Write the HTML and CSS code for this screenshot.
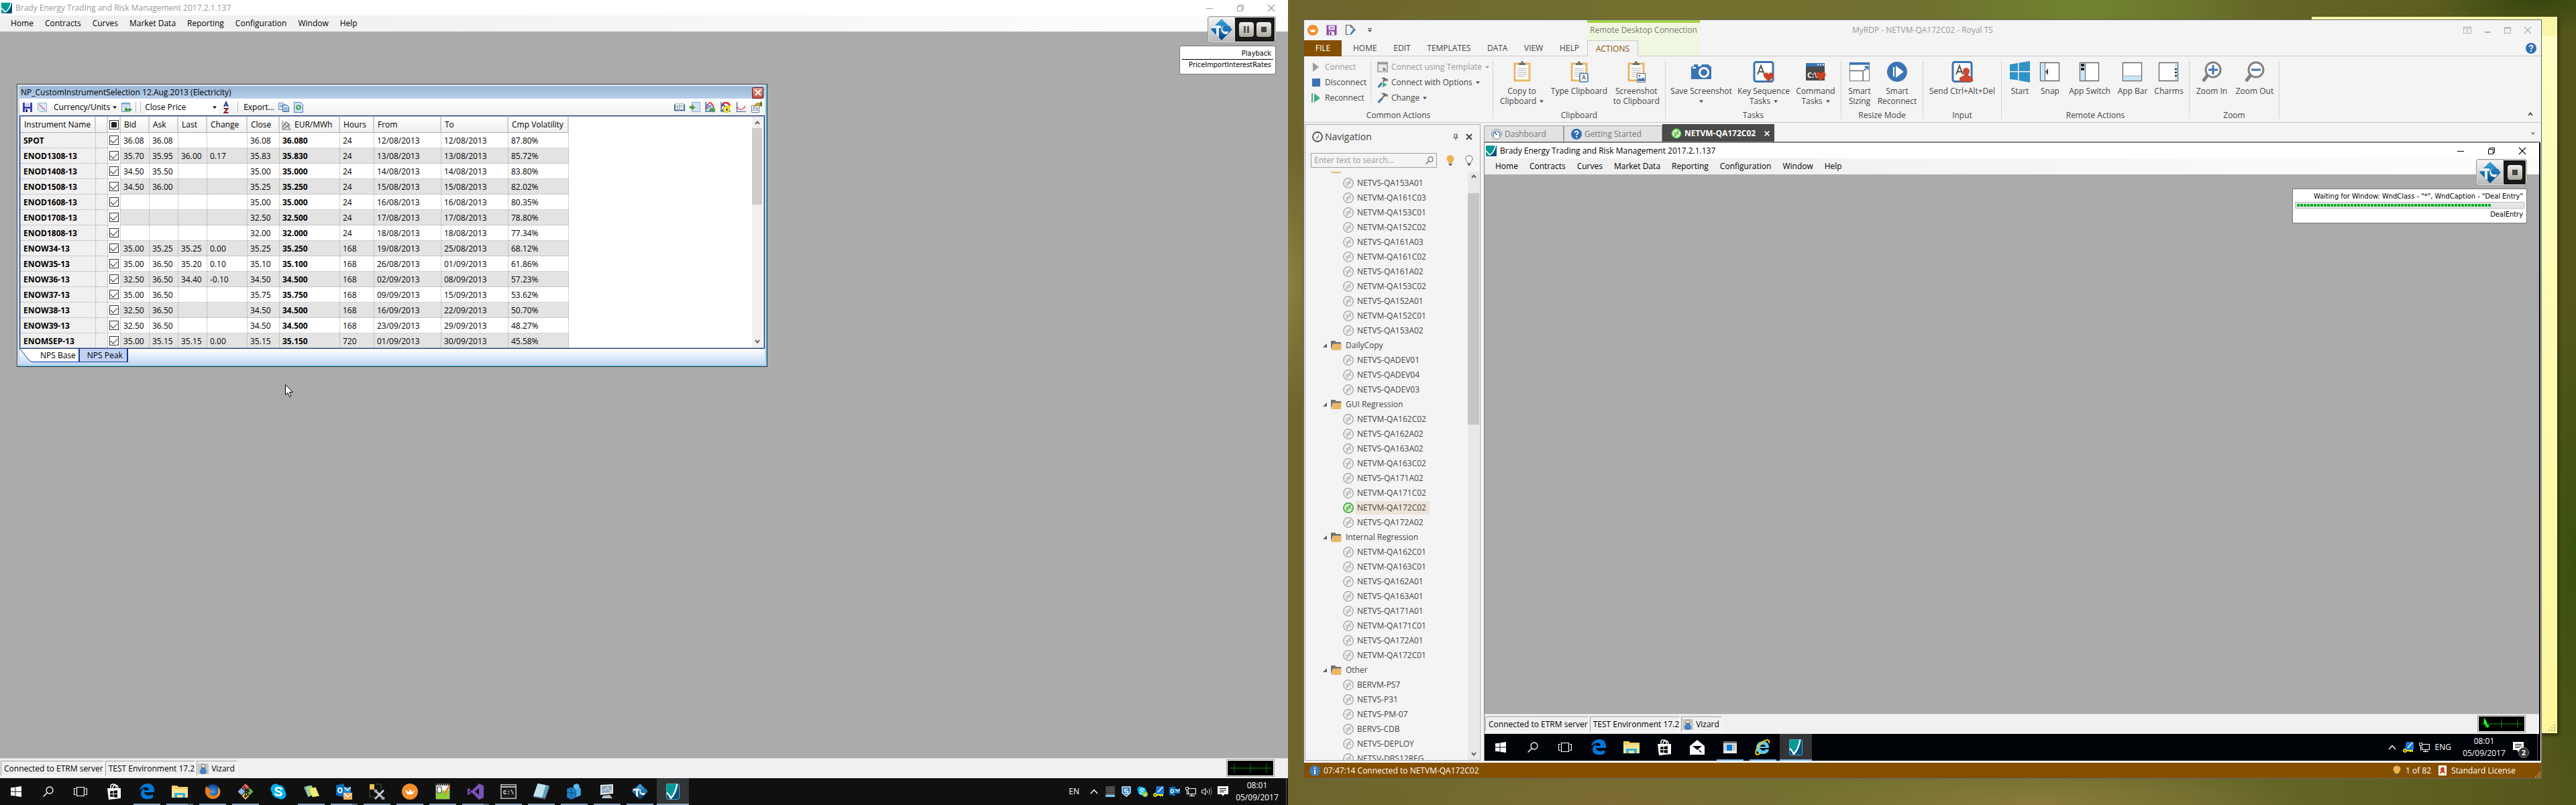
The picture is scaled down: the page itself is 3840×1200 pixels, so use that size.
FILE: index.html
```html
<!DOCTYPE html>
<html lang="en">
<head>
<meta charset="utf-8">
<title>Brady Energy Trading and Risk Management 2017.2.1.137</title>
<meta name="viewport" content="width=device-width, initial-scale=1">
<link rel="stylesheet" href="styles.css">
</head>
<body>
<svg class="sprite" aria-hidden="true">
  <defs>
    <linearGradient id="tcg" x1="0" y1="0" x2="0" y2="1"><stop offset="0" stop-color="#3fa9e0"/><stop offset="1" stop-color="#003f7d"/></linearGradient>
    <radialGradient id="ffg"><stop offset="0" stop-color="#3fa0e8"/><stop offset="1" stop-color="#123a86"/></radialGradient>
    <pattern id="dots" width="2" height="2" patternUnits="userSpaceOnUse"><rect width="2" height="2" fill="#1a2ad8"/><rect width="1" height="1" fill="#25c4d8"/><rect x="1" y="1" width="1" height="1" fill="#25c4d8"/></pattern>
  </defs>
  <symbol id="brady" viewBox="0 0 16 16"><path d="M0 0h16L8 16H1.500a1.500 1.500 0 0 1-1.500-1.500z" fill="#009a93"/><path d="M16 0v14.500a1.500 1.500 0 0 1-1.500 1.500H2C10 13 13 8 14 0z" fill="#004f80"/><path d="M14.500 0C13 8 9 13 5.500 14 4 12 2 9 0 8.200" fill="none" stroke="#fff" stroke-width="1.600"/></symbol>
  <symbol id="brady-big" viewBox="0 0 24 24"><rect x="2" width="20" height="24" rx="2" fill="#00507f"/><path d="M4 0h15C17 9 13 18 9 22 7 18 5 15 2 14V2a2 2 0 0 1 2-2z" fill="#009a93"/><path d="M18.500 0C17 10 13 18 9 22 7 18 5 15 2 13.500" fill="none" stroke="#fff" stroke-width="2.400"/><rect x="2.500" y=".5" width="19" height="23" rx="2" fill="none" stroke="#5f9fb8"/></symbol>
  <symbol id="min" viewBox="0 0 12 12"><path d="M1 6.500h10" stroke="currentColor"/></symbol>
  <symbol id="restore" viewBox="0 0 12 12"><path d="M1.500 3.500h7v7h-7zM3.500 3.500v-2h7v7h-2" fill="none" stroke="currentColor"/></symbol>
  <symbol id="close" viewBox="0 0 12 12"><path d="M1 1l10 10M11 1L1 11" stroke="currentColor" stroke-width="1.100"/></symbol>
  <symbol id="xbold" viewBox="0 0 12 12"><path d="M2 2l8 8M10 2l-8 8" stroke="currentColor" stroke-width="2"/></symbol>
  <symbol id="down" viewBox="0 0 6 6"><path d="M0 1.500h6L3 5z" fill="currentColor"/></symbol>
  <symbol id="chev-up" viewBox="0 0 8 8"><path d="M1 6l3-3.500L7 6" fill="none" stroke="currentColor" stroke-width="1.800"/></symbol>
  <symbol id="chev-down" viewBox="0 0 8 8"><path d="M1 2l3 3.500L7 2" fill="none" stroke="currentColor" stroke-width="1.800"/></symbol>
  <symbol id="tc" viewBox="0 0 32 32"><path d="M16 0l16 16-16 16L0 16z" fill="url(#tcg)"/><path d="M3 10h12v4h-3v14l-4-4V14H1z" fill="#e6eef4"/><path d="M27 10h-6c-5 0-5 9 0 9h6l-3 4c-11 1-11-13-3-13" fill="#e6eef4"/><path d="M29 12h-7c-3 0-3 5 0 5h7" fill="none" stroke="#1c74b4" stroke-width="2"/></symbol>
  <symbol id="save" viewBox="0 0 16 16"><path d="M1 1h14v14H1z" fill="#3d3fae"/><path d="M4 1h8v6H4z" fill="#fff"/><path d="M5 3h6M5 5h6" stroke="#8a8fd8"/><path d="M4 10h8v5H4z" fill="#fff"/><path d="M5 11h3v4H5z" fill="#23256e"/></symbol>
  <symbol id="curve" viewBox="0 0 16 16"><path d="M1.500 1.500h13v13h-10l-3-3z" fill="#d8eaf9" stroke="#8fb3d9"/><path d="M3 4c4 0 4 7 10 8" fill="none" stroke="#f06a6a" stroke-width="1.400"/></symbol>
  <symbol id="sheet-in" viewBox="0 0 16 16"><path d="M1.500 1.500h12v13h-12z" fill="#f2f8ff" stroke="#5b93c9"/><path d="M2 3h11" stroke="#7fc0d8" stroke-width="2"/><path d="M3 6h9M3 8h9M3 13h9" stroke="#9dbbd8"/><path d="M5 11l4-3v2h7v3H9v2z" fill="#3f9a35"/></symbol>
  <symbol id="az" viewBox="0 0 10 18"><path d="M2 8l3-7 3 7M3 6h4" fill="none" stroke="#2f4f8f" stroke-width="2"/><path d="M1.500 11h6l-5 6h6" fill="none" stroke="#8f2430" stroke-width="2"/></symbol>
  <symbol id="copy" viewBox="0 0 16 16"><path d="M.5 1.500h7l2 2v8h-9z" fill="#dbe9f8" stroke="#5f8cc0"/><path d="M6.500 4.500h6l3 3v7h-9z" fill="#cfe2f5" stroke="#31589c"/><path d="M2 5h4M2 7h4M8 9h6M8 11h6M8 13h6" stroke="#5f8cc0"/></symbol>
  <symbol id="refresh" viewBox="0 0 16 16"><path d="M1.500.5h10l3 3v12h-13z" fill="#cfe4f6" stroke="#4a84bf"/><path d="M5 8c0-3 4-4 5.500-1.500M11 8c0 3-4 4-5.500 1.500" fill="none" stroke="#3d9440" stroke-width="1.600"/><path d="M11.500 4.500V8H8.500zM4.500 11.500V8h3z" fill="#3d9440"/></symbol>
  <symbol id="chart-off" viewBox="0 0 14 14"><path d="M1 0v13h13" fill="none" stroke="#777"/><path d="M2 10C5 0 8 0 12 9M3 3l9 9M3 12l9-7" fill="none" stroke="#8a7f80" stroke-width="1.600"/></symbol>
  <symbol id="book" viewBox="0 0 18 16"><path d="M0 3h18v11H0z" fill="#2d5a8c"/><path d="M2 2c3-1 5-1 7 .5V13c-2-1.300-4-1.300-7-.5zM16 2c-3-1-5-1-7 .5V13c2-1.300 4-1.300 7-.5z" fill="#f2f5f8" stroke="#7f9bb8" stroke-width=".8"/><path d="M4 5h3M4 7h3M4 9h3M11 5h3M11 7h3" stroke="#777"/></symbol>
  <symbol id="sheet-go" viewBox="0 0 16 16"><path d="M3.500.5h12v14h-12z" fill="#f2f8ff" stroke="#6d9fce"/><path d="M5 3h9M8 6h6M8 9h6M5 12h9" stroke="#8fb2d4"/><path d="M0 6h4V3.500L8.500 8 4 12.500V10H0z" fill="#4fa044"/></symbol>
  <symbol id="chart-go" viewBox="0 0 16 16"><path d="M1 0v14h14" fill="none" stroke="#3a66a8" stroke-width="1.400"/><path d="M2 10C5-2 9-1 13 8" fill="none" stroke="#e03838" stroke-width="2"/><path d="M2 3l10 8M2 11l8-7" stroke="#3f7bc8" stroke-width="1.500"/><path d="M6 10h5V7l5 4.500-5 4.500v-3H6z" fill="#4fa044"/></symbol>
  <symbol id="chart-lock" viewBox="0 0 16 16"><path d="M1 0v14h14" fill="none" stroke="#3a66a8" stroke-width="1.400"/><path d="M2 7C5-1 10-1 14 5" fill="none" stroke="#e03838" stroke-width="3"/><path d="M2 3l7 5M2 13l8-7" stroke="#2f66c8" stroke-width="2"/><circle cx="9" cy="11" r="4" fill="#fff" stroke="#e8cf00" stroke-width="2.600"/><path d="M9 11l3-5h3" fill="none" stroke="#e8cf00" stroke-width="2"/><circle cx="9.500" cy="11.500" r="1.500" fill="#333"/></symbol>
  <symbol id="curve-red" viewBox="0 0 16 16"><path d="M1.500 0v14.500H15" fill="none" stroke="#3a66a8" stroke-width="1.200"/><path d="M2 7c3 6 8 6 12-1" fill="none" stroke="#f03a3a" stroke-width="1.400"/></symbol>
  <symbol id="props" viewBox="0 0 16 16"><path d="M.5 5.500h11v10H.5z" fill="#f7f9fb" stroke="#66809c"/><path d="M2 9h3M6 9h4M2 12h3M6 12h4" stroke="#7088a8" stroke-width="1.400"/><path d="M3 6l5-5h5v6L9 5 5 8z" fill="#c89a35"/><path d="M13 0h3v7l-3-1z" fill="#4b7f3f"/></symbol>
  <symbol id="user" viewBox="0 0 16 16"><rect width="16" height="16" fill="#c9c5c2"/><circle cx="8" cy="4" r="2.800" fill="#f0e3c8" stroke="#888"/><path d="M5.500 6.500h5c-1 2 2 3 2 6 0 4-9 4-9 0 0-3 3-4 2-6z" fill="#3f86cf" stroke="#2d5f9c" stroke-width=".8"/></symbol>
  <symbol id="win" viewBox="0 0 16 16"><path d="M0 2.300l6.500-.9v6.100H0zM7.400 1.300L16 0v7.500H7.400zM0 8.400h6.500v6.200L0 13.700zM7.400 8.400H16V16l-8.600-1.300z" fill="currentColor"/></symbol>
  <symbol id="search" viewBox="0 0 16 16"><circle cx="10" cy="6" r="5" fill="none" stroke="currentColor" stroke-width="1.300"/><path d="M6.500 9.500L.5 15.500" stroke="currentColor" stroke-width="1.400"/></symbol>
  <symbol id="taskview" viewBox="0 0 20 14"><path d="M4.500.5h11v13h-11zM3 2.500H.5v9H3M17 2.500h2.500v9H17" fill="none" stroke="currentColor" stroke-width="1.200"/></symbol>
  <symbol id="store" viewBox="0 0 22 24"><path d="M1 7l20 0v15L3 24z" fill="#fff"/><path d="M6 9V4c0-4 8-4 8 0v3M9 7c0-6 8-6 8 0" fill="none" stroke="#fff" stroke-width="1.500"/><path d="M5 11.500l4.500-.7V15H5zM10.500 10.700l5.500-.7v5h-5.500zM5 16h4.500v4.200L5 19.500zM10.500 16H16v5l-5.500-.8z" fill="#111"/></symbol>
  <symbol id="edge" viewBox="0 0 22 24"><path d="M0 11C1 4 6 0 12 0c6 0 10 4 10 10v3H7c.3 5 8 6 13 3v5C13 25 2 24 2 15c0-4 3-7 6-8-1 1-1.500 2-1.600 3H14C14 4 5 4 0 11z" fill="#0078d7"/></symbol>
  <symbol id="explorer" viewBox="0 0 24 20"><path d="M0 1h8l2 2h14v16H0z" fill="#f5cf63"/><path d="M0 6h24v13H0z" fill="#fde293"/><path d="M4 19v-7h16v7h-4v-4H8v4z" fill="#2fb3e8"/></symbol>
  <symbol id="firefox" viewBox="0 0 24 24"><circle cx="12" cy="12" r="11" fill="url(#ffg)"/><path d="M3 3C-1 9 0 21 11 23c8 1 14-6 12-14l-3-4c2 6 0 12-5 13-5 1-8-2-8-5 2 1 4 0 4-1-3-1-4-3-3-5C5 8 3 6 3 3z" fill="#ec7c1c"/><path d="M20 5c3 5 2 11-1 14 2-5 2-10 1-14z" fill="#fcd23c"/></symbol>
  <symbol id="git" viewBox="0 0 24 24"><path d="M12 0l5.500 5.500L12 11 6.500 5.500z" fill="#ee6352"/><path d="M6 6.500l5.500 5.500L6 17.500.5 12z" fill="#8ab7f5"/><path d="M18 6.500l5.500 5.500-5.500 5.500-5.500-5.500z" fill="#5fb548"/><path d="M12 13l5.500 5.500L12 24l-5.500-5.500z" fill="#f8d14a"/><path d="M9 4l6 6v9M12 7v12" fill="none" stroke="#222" stroke-width="1.500"/><circle cx="12" cy="19" r="2" fill="#222"/><circle cx="16" cy="11" r="2" fill="#222"/></symbol>
  <symbol id="skype" viewBox="0 0 24 24"><circle cx="8" cy="8" r="7.500" fill="#00aff0"/><circle cx="16" cy="16" r="7.500" fill="#00aff0"/><circle cx="12" cy="12" r="10" fill="#00aff0"/><path d="M16.500 8.500C15.500 5.500 8 5.500 8 9c0 3.500 8.500 2.500 8.500 6 0 3.500-8 3.500-9 .3" fill="none" stroke="#fff" stroke-width="2.600" stroke-linecap="round"/></symbol>
  <symbol id="notes" viewBox="0 0 26 22"><path d="M1 4l9-3 6 14-8 5z" fill="#7fa8dc"/><path d="M4 3l10-2 4 15-10 3z" fill="#a4d278"/><path d="M10 6l10-2 6 14-11 2z" fill="#f4ec78"/></symbol>
  <symbol id="outlook" viewBox="0 0 24 24"><path d="M0 3l13-3v22L0 19z" fill="#0072c6"/><path d="M13 6h11v10H13z" fill="#2a8ad4"/><path d="M13 6l5.500 5L24 6" fill="none" stroke="#fff" stroke-width="1.600"/><ellipse cx="6.500" cy="11" rx="3" ry="3.800" fill="none" stroke="#fff" stroke-width="2"/></symbol>
  <symbol id="outlook-mail" viewBox="0 0 24 24"><use href="#outlook" width="22" height="22"/><path d="M11 14h13v10H11z" fill="#f0ae62"/><path d="M11 14l6.500 6L24 14" fill="none" stroke="#fff" stroke-width="1.200"/></symbol>
  <symbol id="tools" viewBox="0 0 24 24"><path d="M1 1h7v8H1z" fill="#f2c14b"/><path d="M1 20h8M1 9v12M10 1h8v8" fill="none" stroke="#4a8a3a" stroke-dasharray="2 1"/><path d="M9 10l13 13M22 10L9 23" stroke="#cfd4d8" stroke-width="2.600"/><circle cx="10" cy="11" r="2.500" fill="#9aa4ac"/><circle cx="21" cy="22" r="2.500" fill="#9aa4ac"/></symbol>
  <symbol id="royal" viewBox="0 0 22 22"><circle cx="11" cy="11" r="11" fill="#f18f2c"/><path d="M4 9l3.500 6h7L18 9c-2 1-3 2-4 3l-3-5-1 5C8.500 11 6 9 4 9z" fill="#fff"/></symbol>
  <symbol id="npp" viewBox="0 0 22 24"><path d="M1 1h20v22H1z" fill="#f4f4f4" stroke="#999"/><path d="M1 2h20" stroke="#222" stroke-width="2" stroke-dasharray="2 1"/><path d="M1 11l20-1v13H1z" fill="#8bd03a"/><path d="M3 5h6v9H3z" fill="#fff" stroke="#333"/><path d="M12 16L20 2l2 2-8 14z" fill="#e8862e"/></symbol>
  <symbol id="vs" viewBox="0 0 24 24"><path d="M17 0l7 3v18l-7 3L6 13l-4 4-2-1V8l2-1 4 4z" fill="#7a52b8"/><path d="M17 7v10l-6-5zM2.500 9.500v5L5 12z" fill="#101010"/></symbol>
  <symbol id="book-blue" viewBox="0 0 22 22"><path d="M6 0l16 3-6 17L0 18z" fill="#5fa0b8"/><path d="M6 0l11 2-5 17L0 17z" fill="#c4e2ea"/><path d="M0 18l16 3 6-17" fill="none" stroke="#668"/></symbol>
  <symbol id="cubes" viewBox="0 0 22 22"><path d="M1 7l6-2 6 2v12l-6 3-6-3z" fill="#1f7fc0"/><path d="M12 7l6-2 2 2v9l-7 3z" fill="#4aa8e0"/><path d="M10 2l4-2 4 2v4l-4 2-4-2z" fill="#62baf0"/><path d="M1 12l12 1M7 5v17M13 8v11" stroke="#0f5488"/></symbol>
  <symbol id="monitor" viewBox="0 0 24 22"><path d="M2 1l19-1v14l-19 2z" fill="#dfe4e8"/><path d="M4 3l15-1v10L4 13z" fill="#8fa4b8"/><path d="M5 10l3-3 2 3 3-6 3 6h3" fill="none" stroke="#e8f4ff"/><path d="M6 17l10-1 4 5H4z" fill="#b8bec4"/></symbol>
  <symbol id="mail" viewBox="0 0 22 24"><path d="M0 10L11 1l11 9v13H0z" fill="#fff"/><path d="M4 10h14l-7 6zM12 14l7 6-4-1z" fill="#05070a"/></symbol>
  <symbol id="window-app" viewBox="0 0 20 18"><path d="M0 0h20v18H0z" fill="#e6e6e6"/><path d="M0 0h20v3H0z" fill="#6a6a6a"/><path d="M5 5h8v9H5z" fill="#0078d7"/><path d="M14 6h4M14 9h4M14 12h4M1 6h3M1 9h3M1 12h3" stroke="#888"/></symbol>
  <symbol id="ie" viewBox="0 0 24 24"><path d="M2 13C2 6 7 3 12 3c6 0 9 4 9 10H8c0 4 7 5 8 2h5c-1 5-5 7-9 7-6 0-10-4-10-9zm6-2h8c0-4-8-4-8 0z" fill="#5ccaf2"/><path d="M21 6c2-8-7-5-13 1C2 13-1 22 3 23c3 0 6-3 6-3" fill="none" stroke="#f5c518" stroke-width="2"/></symbol>
  <symbol id="tray-up" viewBox="0 0 12 8"><path d="M1 7l5-5.500L11 7" fill="none" stroke="currentColor" stroke-width="1.400"/></symbol>
  <symbol id="tray-kb" viewBox="0 0 12 14"><path d="M0 0h12v11H0z" fill="#555"/><path d="M0 2h12M0 5h12M0 8h12" stroke="#111" stroke-dasharray="1 1"/><path d="M0 11h12v3H0z" fill="#7fc8f0"/></symbol>
  <symbol id="tray-shield" viewBox="0 0 14 16"><path d="M1 1h12v9l-6 5-6-5z" fill="#1478c8" stroke="#e8f4ff" stroke-width="1.400"/><path d="M9.500 4.500h-5v3h5v3h-5" fill="none" stroke="#fff" stroke-width="1.500"/></symbol>
  <symbol id="tray-key" viewBox="0 0 16 16"><path d="M5 0h11v12H3z" fill="url(#dots)"/><path d="M14 1L7 9" stroke="#fff" stroke-width="1.400"/><circle cx="3" cy="13" r="2" fill="none" stroke="#f0e800" stroke-width="1.800"/><path d="M5 13h9v2M11 12v3" stroke="#f0e800" stroke-width="2"/></symbol>
  <symbol id="tray-net" viewBox="0 0 16 14"><path d="M5 2.500h10.500v8H4.500V6M9.500 11v2M6 13.300h8" fill="none" stroke="#fff" stroke-width="1.200"/><path d="M.6.600h4v3.800h-4zM2.500 4v8" fill="none" stroke="#fff"/></symbol>
  <symbol id="tray-vol" viewBox="0 0 16 14"><path d="M.5 5h2.500l3-3v10l-3-3H.5z" fill="none" stroke="#fff"/><path d="M8 5c1 1 1 3 0 4M10.500 3c2.500 2 2.500 6 0 8" fill="none" stroke="#fff"/><path d="M13 1c3 3 3 9 0 12" fill="none" stroke="#888"/></symbol>
  <symbol id="tray-chat" viewBox="0 0 16 16"><path d="M0 0h16v12h-6l-2 3-2-3H0z" fill="#fff"/><path d="M3 3.500h10M3 6h10M3 8.500h7" stroke="#111"/></symbol>
  <symbol id="rdp" viewBox="0 0 16 16"><circle cx="8" cy="8" r="7.300" fill="#f0f0f0" stroke="#a0a0a0" stroke-width="1.300"/><path d="M4.500 7l3 2-2.500 3.500M11.500 4l-3 2.800 3 2.200" fill="none" stroke="#a0a0a0" stroke-width="1.300"/></symbol>
  <symbol id="rdp-on" viewBox="0 0 16 16"><circle cx="8" cy="8" r="7.200" fill="#c9f5b4" stroke="#3b9640" stroke-width="1.500"/><path d="M4.500 7l3 2-2.500 3.500M11.500 4l-3 2.800 3 2.200" fill="none" stroke="#3b9640" stroke-width="1.400"/></symbol>
  <symbol id="folder" viewBox="0 0 16 14"><path d="M0 14V0h6l2 2h7v3H3z" fill="#717171"/><path d="M3.500 4.500H16L14.800 14H1.200z" fill="#ebb664"/></symbol>
  <symbol id="tri" viewBox="0 0 6 6"><path d="M6 0v6H0z" fill="#606060"/></symbol>
  <symbol id="save-p" viewBox="0 0 16 16"><path d="M.5.500h15v15H.5z" fill="#8c4ba8"/><path d="M3.500 1.500h9v6h-9z" fill="#fff"/><path d="M5 3.500h6M5 5.500h6" stroke="#8c4ba8"/><path d="M4 10h8v5H4z" fill="#fff"/><path d="M5 11h3v4H5z" fill="#8c4ba8"/></symbol>
  <symbol id="page-edit" viewBox="0 0 16 16"><path d="M1.500 14.500V.5h7l3.500 3.500v3M1.500 14.500H6M8.500.5V4H12" fill="none" stroke="#5a5a5a" stroke-width="1.200"/><path d="M14 5l2 2-6 7-2.500 1 .5-2.500z" fill="#3a76b8"/></symbol>
  <symbol id="play-g" viewBox="0 0 16 16"><path d="M3 1l9 7-9 7z" fill="#9c9c9c"/></symbol>
  <symbol id="stop-b" viewBox="0 0 16 16"><path d="M2 2h12v12H2z" fill="#3b74b4"/></symbol>
  <symbol id="play-gr" viewBox="0 0 16 16"><path d="M1 1h2v14H1zM5 1l9 7-9 7z" fill="#43ae82"/></symbol>
  <symbol id="tmpl" viewBox="0 0 16 16"><path d="M.8 1h14.400v14H.8z" fill="#e8e8e8" stroke="#9c9c9c" stroke-width="1.600"/><path d="M0 1h16v3H0z" fill="#9c9c9c"/><path d="M8 7l7 4.500L8 16z" fill="#8c8c8c" stroke="#f4f4f4"/></symbol>
  <symbol id="hammer" viewBox="0 0 16 16"><path d="M6 2c3-2 6-2 7 1l3-1-1 5-2-2-2 1-2-3z" fill="#6b6b6b"/><path d="M11 4L6 10" stroke="#6b6b6b" stroke-width="2"/><path d="M7 9l-5.500 6" stroke="#3b74b4" stroke-width="3"/></symbol>
  <symbol id="hammer-go" viewBox="0 0 16 16"><use href="#hammer" width="16" height="16"/><path d="M7.500 6.500l8 4.800-8 4.700z" fill="#43ae82" stroke="#f4f4f4" stroke-width=".8"/></symbol>
  <symbol id="clip" viewBox="0 0 28 32"><path d="M3 4h22v25H3z" fill="#fff" stroke="#ebb664" stroke-width="3"/><path d="M9 6V3h3c0-4 4-4 4 0h3v3z" fill="#717171"/><path d="M7 11h14M7 14h14M7 17h14M7 20h14M7 23h11" stroke="#b0b0b0"/></symbol>
  <symbol id="clip-a" viewBox="0 0 28 32"><use href="#clip" width="28" height="32"/><rect x="15" y="18.500" width="12" height="12.500" rx="1.500" fill="#fff" stroke="#3b74b4" stroke-width="1.600"/><path d="M18.500 27.500l2.500-6.500 2.500 6.500M19.500 25.500h3" fill="none" stroke="#444"/></symbol>
  <symbol id="clip-pic" viewBox="0 0 28 32"><use href="#clip" width="28" height="32"/><path d="M15.500 18.500h12v13h-12z" fill="#fff" stroke="#666"/><path d="M16.500 30v-3l3-2 2 2 3-3 2 3v3z" fill="#3b74b4"/><circle cx="19" cy="22" r="1.500" fill="#3b74b4"/></symbol>
  <symbol id="camera" viewBox="0 0 32 26"><path d="M5 2h6v3h4l2-3h10l2 3h2v19H1V5h4z" fill="#3b74b4"/><path d="M3 7h5" stroke="#fff" stroke-width="2"/><circle cx="20" cy="14" r="6.500" fill="none" stroke="#fff" stroke-width="3"/></symbol>
  <symbol id="heart" viewBox="0 0 16 14"><path d="M8 14L1 6.500C-1.500 2 5-2.500 8 2.500c3-5 9.500-.5 7 4z" fill="#cc4128"/></symbol>
  <symbol id="key-a" viewBox="0 0 32 32"><rect x="2" y="1.500" width="28" height="29" rx="3" fill="#fff" stroke="#3b74b4" stroke-width="3"/><path d="M7 20l5-13 5 13M9 16h6" fill="none" stroke="#555" stroke-width="2"/></symbol>
  <symbol id="key-seq" viewBox="0 0 32 32"><use href="#key-a" width="32" height="32"/><use href="#heart" x="15" y="17" width="17" height="14"/></symbol>
  <symbol id="sizing" viewBox="0 0 34 32"><path d="M1.500 2.500h31v28h-31z" fill="#fff" stroke="#666"/><path d="M1 1h32v4H1z" fill="#3b74b4"/><path d="M1.500 14.500h21v16" fill="none" stroke="#666" stroke-width="1.600"/><path d="M24 14l6-6M25 8h5.500v5" fill="none" stroke="#3b74b4" stroke-width="2"/></symbol>
  <symbol id="reconnect" viewBox="0 0 32 32"><circle cx="16" cy="16" r="15" fill="#3b74b4"/><path d="M11 9v14M15 9v14l9-7z" fill="none" stroke="#fff" stroke-width="2"/><path d="M16 10l8 6-8 6z" fill="#fff"/></symbol>
  <symbol id="cad" viewBox="0 0 32 32"><use href="#key-a" width="32" height="32"/><path d="M17 15a5 5 0 0 1 10 0c0 3-1 4-2 5 0 3 7 3 7 6v5H12v-5c0-3 7-3 7-6-1-1-2-2-2-5z" fill="#cc4a30"/></symbol>
  <symbol id="win8" viewBox="0 0 30 32"><path d="M0 5l12-2v12H0zM13.500 2.700L30 0v15H13.500zM0 16.500h12v12L0 27zM13.500 16.500H30V32l-16.500-3z" fill="#3093c6"/></symbol>
  <symbol id="snap" viewBox="0 0 32 32"><path d="M1.500 2.500h28v27h-28z" fill="#fff" stroke="#666" stroke-width="1.300"/><path d="M2 3h6.500v26H2z" fill="#c8e6f8"/><path d="M8.500 2v28" stroke="#666"/><path d="M13 11v10l-4-5z" fill="#444"/></symbol>
  <symbol id="appswitch" viewBox="0 0 32 32"><path d="M1.500 2.500h28v27h-28z" fill="#fff" stroke="#666" stroke-width="1.300"/><path d="M2 3h7.500v26H2z" fill="#c8e6f8"/><path d="M9.500 2v28" stroke="#666"/><path d="M3 4h5v4H3zM3 10h5v4H3z" fill="#222"/></symbol>
  <symbol id="appbar" viewBox="0 0 32 32"><path d="M1.500 2.500h28v27h-28z" fill="#fff" stroke="#666" stroke-width="1.300"/><path d="M2 22h27v7H2z" fill="#c8e6f8"/><path d="M2 22h27" stroke="#aaa"/></symbol>
  <symbol id="charms" viewBox="0 0 32 32"><path d="M1.500 2.500h28v27h-28z" fill="#fff" stroke="#666" stroke-width="1.300"/><path d="M25 3h4v26h-4z" fill="#c8e6f8"/><path d="M26.500 11v12" stroke="#222" stroke-width="3" stroke-dasharray="2 3"/></symbol>
  <symbol id="zin" viewBox="0 0 30 32"><circle cx="17" cy="13" r="11" fill="#fff" stroke="#808080" stroke-width="3"/><path d="M9 21l-7 9" stroke="#808080" stroke-width="5"/><path d="M10 13h14M17 6v14" stroke="#3b74b4" stroke-width="3"/></symbol>
  <symbol id="zout" viewBox="0 0 30 32"><circle cx="17" cy="13" r="11" fill="#fff" stroke="#808080" stroke-width="3"/><path d="M9 21l-7 9" stroke="#808080" stroke-width="5"/><path d="M10 13h14" stroke="#3b74b4" stroke-width="3"/></symbol>
  <symbol id="compass" viewBox="0 0 16 16"><circle cx="8" cy="8" r="7" fill="#fff" stroke="#505050" stroke-width="1.800"/><path d="M10.500 3L9 9H7z" fill="#cc4128"/><path d="M5.500 13L7 7l2 2z" fill="#999"/></symbol>
  <symbol id="gauge" viewBox="0 0 16 16"><circle cx="8" cy="8" r="7.300" fill="#fff" stroke="#777"/><path d="M4 11.500a5 5 0 1 1 8 0" fill="none" stroke="#3b74b4" stroke-width="1.600"/><path d="M8 9L5.500 5" stroke="#555" stroke-width="1.500"/></symbol>
  <symbol id="help" viewBox="0 0 16 16"><circle cx="8" cy="8" r="8" fill="#2f6fb4"/><path d="M5.500 6c0-3.500 5.500-3 5 0-.2 1.500-2.500 1.500-2.500 3.500" fill="none" stroke="#fff" stroke-width="1.800"/><path d="M7 11h2v2H7z" fill="#fff"/></symbol>
  <symbol id="info" viewBox="0 0 16 16"><circle cx="8" cy="8" r="8" fill="#3f7cb8"/><path d="M7 3h2v2H7zM7 6.500h2V13H7z" fill="#fff"/></symbol>
  <symbol id="bulb" viewBox="0 0 12 16"><path d="M6 .500C2.500.5.500 3 .5 5.500.5 8 3 9.500 3.500 12h5C9 9.500 11.500 8 11.500 5.500 11.500 3 9.500.5 6 .5z" fill="#ebb155"/><path d="M3.500 13.500h5M4.500 15h3" stroke="#5a5a5a" stroke-width="1.300"/></symbol>
  <symbol id="bulb-off" viewBox="0 0 12 16"><path d="M6 1C3 1 1 3 1 5.500 1 8 3 9.500 4 12.500h4C9 9.500 11 8 11 5.500 11 3 9 1 6 1z" fill="#fdfdfd" stroke="#666"/><path d="M4 13.500h4M4.500 15h3" stroke="#555" stroke-width="1.300"/></symbol>
  <symbol id="pin" viewBox="0 0 10 12"><path d="M3 2h4v5H3zM1.500 7.500h7M5 8v3M6.500 2v5" fill="none" stroke="#666" stroke-width="1.200"/></symbol>
  <symbol id="license" viewBox="0 0 12 16"><rect width="12" height="15" rx="1" fill="#fff"/><circle cx="6" cy="5.500" r="3" fill="#cc4128"/><path d="M3 8h6l1 5-2.500-2-1.500-1-1.500 1L2 13z" fill="#cc4128"/></symbol>
  <symbol id="grip" viewBox="0 0 10 10"><path d="M8 0h2v2H8zM8 4h2v2H8zM4 4h2v2H4zM8 8h2v2H8zM4 8h2v2H4zM0 8h2v2H0z" fill="currentColor"/></symbol>
  <symbol id="upbox" viewBox="0 0 14 12"><path d="M.5.500h13v11H.5zM.5 2.500h13M7 11V5M4.500 7L7 4.500 9.500 7" fill="none" stroke="currentColor"/></symbol>
  <symbol id="maxbox" viewBox="0 0 12 12"><path d="M1.500 2.500h9v8h-9z" fill="none" stroke="currentColor"/><path d="M1 1.500h10v2H1z" fill="currentColor"/></symbol>
  <symbol id="pause" viewBox="0 0 12 12"><path d="M2 1h3v10H2zM7 1h3v10H7z" fill="#555"/></symbol>
  <symbol id="stop" viewBox="0 0 12 12"><path d="M2 2h8v8H2z" fill="#444"/></symbol>
  <symbol id="cursor" viewBox="0 0 12 19"><path d="M.5.500v15l3.500-3 2.500 6 2.500-1-2.500-6h5z" fill="#fff" stroke="#000"/></symbol>
</svg>

<main class="desktop">
  <section class="monitor app">
    <header class="titlebar titlebar-idle">
      <svg class="i16"><use href="#brady"/></svg>
      <h1 class="title">Brady Energy Trading and Risk Management 2017.2.1.137</h1>
      <div class="wincontrols">
        <button aria-label="Minimize"><svg class="i12"><use href="#min"/></svg></button>
        <button aria-label="Restore"><svg class="i12"><use href="#restore"/></svg></button>
        <button aria-label="Close"><svg class="i12"><use href="#close"/></svg></button>
      </div>
    </header>
    <nav class="menu">
      <button>Home</button><button>Contracts</button><button>Curves</button><button>Market Data</button><button>Reporting</button><button>Configuration</button><button>Window</button><button>Help</button>
    </nav>
    <aside class="player">
      <div class="player-box">
        <span class="player-logo"><svg class="i32"><use href="#tc"/></svg></span>
        <span class="player-keys">
          <button aria-label="Pause"><svg class="i12"><use href="#pause"/></svg></button>
          <button aria-label="Stop"><svg class="i12"><use href="#stop"/></svg></button>
        </span>
      </div>
      <div class="balloon balloon-play">
        <p class="line">Playback</p>
        <p class="under">PriceImportInterestRates</p>
      </div>
    </aside>
    <div class="workspace">
      <section class="mdi">
        <header class="mdi-title"><h2>NP_CustomInstrumentSelection 12.Aug.2013 (Electricity)</h2><button class="mdi-close" aria-label="Close"><svg class="i12"><use href="#xbold"/></svg></button></header>
        <div class="toolbar">
          <button aria-label="Save"><svg class="i16"><use href="#save"/></svg></button>
          <button aria-label="Curve"><svg class="i16"><use href="#curve"/></svg></button>
          <button class="tb-units">Currency/Units<svg class="i6"><use href="#down"/></svg></button>
          <button aria-label="Import"><svg class="i16"><use href="#sheet-in"/></svg></button>
          <span class="tb-sep tb-double"></span>
          <label class="combo"><select aria-label="Price"><option>Close Price</option></select><svg class="i6"><use href="#down"/></svg></label>
          <button aria-label="Sort"><svg class="iaz"><use href="#az"/></svg></button>
          <span class="tb-sep tb-gap"></span>
          <button>Export...</button>
          <button aria-label="Copy"><svg class="i16"><use href="#copy"/></svg></button>
          <button aria-label="Refresh"><svg class="i16"><use href="#refresh"/></svg></button>
          <div class="tb-right">
            <button aria-label="Book"><svg class="i16"><use href="#book"/></svg></button>
            <button aria-label="Send to sheet"><svg class="i16"><use href="#sheet-go"/></svg></button>
            <button aria-label="Send to chart"><svg class="i16"><use href="#chart-go"/></svg></button>
            <button aria-label="Chart options"><svg class="i16"><use href="#chart-lock"/></svg></button>
            <button aria-label="Smile"><svg class="i16"><use href="#curve-red"/></svg></button>
            <button aria-label="Properties"><svg class="i16"><use href="#props"/></svg></button>
          </div>
        </div>
        <div class="grid-frame">
          <div class="grid-view">
            <table class="grid">
              <colgroup><col class="c-name"><col class="c-gap"><col class="c-chk"><col class="c-num"><col class="c-num"><col class="c-num"><col class="c-chg"><col class="c-cls"><col class="c-eur"><col class="c-hrs"><col class="c-date"><col class="c-date"><col class="c-vol"></colgroup>
              <thead><tr><th>Instrument Name</th><th></th><th class="chk"><input type="checkbox" class="some" aria-label="Select all"></th><th>Bid</th><th>Ask</th><th>Last</th><th>Change</th><th>Close</th><th class="th-eur"><svg class="i14"><use href="#chart-off"/></svg>EUR/MWh</th><th>Hours</th><th>From</th><th>To</th><th>Cmp Volatility</th></tr></thead>
              <tbody>
                <tr><td>SPOT</td><td></td><td><input type="checkbox" checked aria-label="SPOT"></td><td>36.08</td><td>36.08</td><td></td><td></td><td>36.08</td><td>36.080</td><td>24</td><td>12/08/2013</td><td>12/08/2013</td><td>87.80%</td></tr>
                <tr><td>ENOD1308-13</td><td></td><td><input type="checkbox" checked aria-label="ENOD1308-13"></td><td>35.70</td><td>35.95</td><td>36.00</td><td>0.17</td><td>35.83</td><td>35.830</td><td>24</td><td>13/08/2013</td><td>13/08/2013</td><td>85.72%</td></tr>
                <tr><td>ENOD1408-13</td><td></td><td><input type="checkbox" checked aria-label="ENOD1408-13"></td><td>34.50</td><td>35.50</td><td></td><td></td><td>35.00</td><td>35.000</td><td>24</td><td>14/08/2013</td><td>14/08/2013</td><td>83.80%</td></tr>
                <tr><td>ENOD1508-13</td><td></td><td><input type="checkbox" checked aria-label="ENOD1508-13"></td><td>34.50</td><td>36.00</td><td></td><td></td><td>35.25</td><td>35.250</td><td>24</td><td>15/08/2013</td><td>15/08/2013</td><td>82.02%</td></tr>
                <tr><td>ENOD1608-13</td><td></td><td><input type="checkbox" checked aria-label="ENOD1608-13"></td><td></td><td></td><td></td><td></td><td>35.00</td><td>35.000</td><td>24</td><td>16/08/2013</td><td>16/08/2013</td><td>80.35%</td></tr>
                <tr><td>ENOD1708-13</td><td></td><td><input type="checkbox" checked aria-label="ENOD1708-13"></td><td></td><td></td><td></td><td></td><td>32.50</td><td>32.500</td><td>24</td><td>17/08/2013</td><td>17/08/2013</td><td>78.80%</td></tr>
                <tr><td>ENOD1808-13</td><td></td><td><input type="checkbox" checked aria-label="ENOD1808-13"></td><td></td><td></td><td></td><td></td><td>32.00</td><td>32.000</td><td>24</td><td>18/08/2013</td><td>18/08/2013</td><td>77.34%</td></tr>
                <tr><td>ENOW34-13</td><td></td><td><input type="checkbox" checked aria-label="ENOW34-13"></td><td>35.00</td><td>35.25</td><td>35.25</td><td>0.00</td><td>35.25</td><td>35.250</td><td>168</td><td>19/08/2013</td><td>25/08/2013</td><td>68.12%</td></tr>
                <tr><td>ENOW35-13</td><td></td><td><input type="checkbox" checked aria-label="ENOW35-13"></td><td>35.00</td><td>36.50</td><td>35.20</td><td>0.10</td><td>35.10</td><td>35.100</td><td>168</td><td>26/08/2013</td><td>01/09/2013</td><td>61.86%</td></tr>
                <tr><td>ENOW36-13</td><td></td><td><input type="checkbox" checked aria-label="ENOW36-13"></td><td>32.50</td><td>36.50</td><td>34.40</td><td>-0.10</td><td>34.50</td><td>34.500</td><td>168</td><td>02/09/2013</td><td>08/09/2013</td><td>57.23%</td></tr>
                <tr><td>ENOW37-13</td><td></td><td><input type="checkbox" checked aria-label="ENOW37-13"></td><td>35.00</td><td>36.50</td><td></td><td></td><td>35.75</td><td>35.750</td><td>168</td><td>09/09/2013</td><td>15/09/2013</td><td>53.62%</td></tr>
                <tr><td>ENOW38-13</td><td></td><td><input type="checkbox" checked aria-label="ENOW38-13"></td><td>32.50</td><td>36.50</td><td></td><td></td><td>34.50</td><td>34.500</td><td>168</td><td>16/09/2013</td><td>22/09/2013</td><td>50.70%</td></tr>
                <tr><td>ENOW39-13</td><td></td><td><input type="checkbox" checked aria-label="ENOW39-13"></td><td>32.50</td><td>36.50</td><td></td><td></td><td>34.50</td><td>34.500</td><td>168</td><td>23/09/2013</td><td>29/09/2013</td><td>48.27%</td></tr>
                <tr><td>ENOMSEP-13</td><td></td><td><input type="checkbox" checked aria-label="ENOMSEP-13"></td><td>35.00</td><td>35.15</td><td>35.15</td><td>0.00</td><td>35.15</td><td>35.150</td><td>720</td><td>01/09/2013</td><td>30/09/2013</td><td>45.58%</td></tr>
              </tbody>
            </table>
            <div class="scroll grid-scroll"><svg class="i8"><use href="#chev-up"/></svg><span class="thumb"></span><svg class="i8"><use href="#chev-down"/></svg></div>
          </div>
        </div>
        <div class="sheet-tabs">
          <svg class="tab-slope" viewBox="0 0 22 20"><path d="M0 0h22v19H20.500C13 19 9 8 0 0z" fill="#fff"/><path d="M0 0C9 8 13 19.500 20.500 19.500H22" fill="none" stroke="#17389a"/></svg>
          <button class="sheet-on">NPS Base</button><button class="sheet-off">NPS Peak</button>
        </div>
      </section>
      <svg class="cursor"><use href="#cursor"/></svg>
    </div>
    <footer class="status">
      <span class="cell">Connected to ETRM server</span><span class="cell">TEST Environment 17.2</span><span class="cell cell-user"><svg class="i16"><use href="#user"/></svg>Vizard</span>
      <span class="scope"><svg viewBox="0 0 68 22"><path d="M3 11h62M10 4v14M34 4v14M58 4v14" stroke="#0b8a12"/></svg></span>
    </footer>
    <footer class="taskbar">
      <div class="sys">
        <button aria-label="Start"><svg class="i16"><use href="#win"/></svg></button>
        <button aria-label="Search"><svg class="i16"><use href="#search"/></svg></button>
        <button aria-label="Task view"><svg class="i20"><use href="#taskview"/></svg></button>
      </div>
      <div class="apps">
        <button aria-label="Store"><svg class="i24"><use href="#store"/></svg></button>
        <button class="open" aria-label="Edge"><svg class="i24"><use href="#edge"/></svg></button>
        <button class="open many" aria-label="File Explorer"><svg class="i24"><use href="#explorer"/></svg></button>
        <button class="open" aria-label="Firefox"><svg class="i24"><use href="#firefox"/></svg></button>
        <button class="open" aria-label="Git Extensions"><svg class="i24"><use href="#git"/></svg></button>
        <button aria-label="Skype"><svg class="i24"><use href="#skype"/></svg></button>
        <button class="open" aria-label="Sticky Notes"><svg class="i24"><use href="#notes"/></svg></button>
        <button class="open many" aria-label="Outlook"><svg class="i24"><use href="#outlook-mail"/></svg></button>
        <button class="open" aria-label="SQL Server"><svg class="i24"><use href="#tools"/></svg></button>
        <button class="open" aria-label="Royal TS"><svg class="i24"><use href="#royal"/></svg></button>
        <button class="open" aria-label="Notepad++"><svg class="i24"><use href="#npp"/></svg></button>
        <button class="open many" aria-label="Visual Studio"><svg class="i24"><use href="#vs"/></svg></button>
        <button class="open" aria-label="Command Prompt"><svg class="i24" viewBox="0 0 24 24"><path d="M.8 1.800h22.400v20.400H.8z" fill="#1b1b1b" stroke="#b8b8b8" stroke-width="1.600"/><path d="M1 5h22" stroke="#b8b8b8" stroke-width="2"/><text x="4" y="16" font-family="Liberation Mono, monospace" font-weight="bold" font-size="9" fill="#e8e8e8">C:\</text></svg></button>
        <button class="open" aria-label="Notepad"><svg class="i24"><use href="#book-blue"/></svg></button>
        <button class="open" aria-label="Registry Editor"><svg class="i24"><use href="#cubes"/></svg></button>
        <button class="open" aria-label="Task Manager"><svg class="i24"><use href="#monitor"/></svg></button>
        <button class="open" aria-label="TestComplete"><svg class="i24"><use href="#tc"/></svg></button>
        <button class="open active" aria-label="Brady ETRM"><svg class="i24"><use href="#brady-big"/></svg></button>
      </div>
      <div class="tray">
        <span class="lang">EN</span>
        <svg class="i16"><use href="#tray-up" x="2" y="4" width="12" height="8"/></svg>
        <svg class="i16"><use href="#tray-kb"/></svg>
        <svg class="i16"><use href="#tray-shield"/></svg>
        <svg class="i16"><use href="#skype" width="15" height="15"/><circle cx="12" cy="12" r="4" fill="#8cc63f"/><path d="M10 12l2 2 2.500-3" fill="none" stroke="#fff"/></svg>
        <svg class="i16"><use href="#tray-key"/></svg>
        <svg class="i16"><use href="#outlook"/></svg>
        <svg class="i16"><use href="#tray-net"/></svg>
        <svg class="i16"><use href="#tray-vol"/></svg>
        <svg class="i16"><use href="#tray-chat"/></svg>
        <time class="clock">08:01<br>05/09/2017</time>
        <span class="peek"></span>
      </div>
    </footer>
  </section>

  <section class="monitor wallpaper">
    <div class="sticky"><svg class="grip"><use href="#grip"/></svg></div>
    <section class="royal">
      <header class="rt-title">
        <div class="rt-left">
          <div class="quick">
            <svg class="i16"><use href="#royal"/></svg>
            <button aria-label="Save"><svg class="i16"><use href="#save-p"/></svg></button>
            <button aria-label="Edit document"><svg class="i16"><use href="#page-edit"/></svg></button>
            <button aria-label="Customize"><svg class="i6"><path d="M0 .5h6" stroke="currentColor"/><use href="#down" y="1"/></svg></button>
          </div>
          <span class="context">Remote Desktop Connection</span>
        </div>
        <h2>MyRDP - NETVM-QA172C02 - Royal TS</h2>
        <div class="rt-controls">
          <button aria-label="Ribbon display"><svg class="i12"><use href="#upbox"/></svg></button>
          <button aria-label="Minimize"><svg class="i12"><path d="M2 9h8" stroke="currentColor" stroke-width="2"/></svg></button>
          <button aria-label="Maximize"><svg class="i12"><use href="#maxbox"/></svg></button>
          <button aria-label="Close"><svg class="i12"><use href="#close"/></svg></button>
        </div>
      </header>
      <nav class="rt-tabs">
        <button class="file">FILE</button>
        <div class="tabset"><button>HOME</button><button>EDIT</button><button>TEMPLATES</button><button>DATA</button><button>VIEW</button><button>HELP</button></div>
        <button class="on">ACTIONS</button><span class="context-fill"></span>
        <button class="helpbtn" aria-label="Help"><svg class="i16"><use href="#help"/></svg></button>
      </nav>
      <div class="ribbon">
        <div class="group g-common">
          <div class="common">
            <div class="common-a">
              <button class="dim"><svg class="i16"><use href="#play-g"/></svg>Connect</button>
              <button><svg class="i16"><use href="#stop-b"/></svg>Disconnect</button>
              <button><svg class="i16"><use href="#play-gr"/></svg>Reconnect</button>
            </div>
            <div class="common-b">
              <button class="dim"><svg class="i16"><use href="#tmpl"/></svg>Connect using Template<svg class="i6"><use href="#down"/></svg></button>
              <button><svg class="i16"><use href="#hammer-go"/></svg>Connect with Options<svg class="i6"><use href="#down"/></svg></button>
              <button><svg class="i16"><use href="#hammer"/></svg>Change<svg class="i6"><use href="#down"/></svg></button>
            </div>
          </div>
          <span class="caption">Common Actions</span>
        </div>
        <div class="group g-clip">
          <div class="big">
            <button><svg class="i32"><use href="#clip"/></svg>Copy to<span>Clipboard<svg class="i6"><use href="#down"/></svg></span></button>
            <button><svg class="i32"><use href="#clip-a"/></svg>Type Clipboard</button>
            <button><svg class="i32"><use href="#clip-pic"/></svg>Screenshot<span>to Clipboard</span></button>
          </div>
          <span class="caption">Clipboard</span>
        </div>
        <div class="group g-tasks">
          <div class="big">
            <button><svg class="i32"><use href="#camera"/></svg>Save Screenshot<span><svg class="i6"><use href="#down"/></svg></span></button>
            <button><svg class="i32"><use href="#key-seq"/></svg>Key Sequence<span>Tasks<svg class="i6"><use href="#down"/></svg></span></button>
            <button><svg class="i32" viewBox="0 0 32 32"><path d="M1 3h28v26H1z" fill="#4a4a4a"/><path d="M1 3h28v5H1z" fill="#3b74b4"/><path d="M18 5.500h10" stroke="#fff" stroke-width="2" stroke-dasharray="2 2"/><text x="3" y="25" font-family="Open Sans, sans-serif" font-weight="bold" font-size="11" fill="#fff">C:\</text><use href="#heart" x="15" y="16" width="16" height="14"/></svg>Command<span>Tasks<svg class="i6"><use href="#down"/></svg></span></button>
          </div>
          <span class="caption">Tasks</span>
        </div>
        <div class="group g-resize">
          <div class="big">
            <button><svg class="i32"><use href="#sizing"/></svg>Smart<span>Sizing</span></button>
            <button><svg class="i32"><use href="#reconnect"/></svg>Smart<span>Reconnect</span></button>
          </div>
          <span class="caption">Resize Mode</span>
        </div>
        <div class="group g-input">
          <div class="big">
            <button><svg class="i32"><use href="#cad"/></svg>Send Ctrl+Alt+Del</button>
          </div>
          <span class="caption">Input</span>
        </div>
        <div class="group g-remote">
          <div class="big">
            <button><svg class="i32"><use href="#win8"/></svg>Start</button>
            <button><svg class="i32"><use href="#snap"/></svg>Snap</button>
            <button><svg class="i32"><use href="#appswitch"/></svg>App Switch</button>
            <button><svg class="i32"><use href="#appbar"/></svg>App Bar</button>
            <button><svg class="i32"><use href="#charms"/></svg>Charms</button>
          </div>
          <span class="caption">Remote Actions</span>
        </div>
        <div class="group g-zoom">
          <div class="big">
            <button><svg class="i32"><use href="#zin"/></svg>Zoom In</button>
            <button><svg class="i32"><use href="#zout"/></svg>Zoom Out</button>
          </div>
          <span class="caption">Zoom</span>
        </div>
        <button class="collapse" aria-label="Collapse ribbon"><svg class="i8"><use href="#chev-up"/></svg></button>
      </div>
      <div class="rt-body">
        <aside class="navpane">
          <header class="nav-head"><svg class="i16"><use href="#compass"/></svg><h3>Navigation</h3><button aria-label="Pin"><svg class="i12"><use href="#pin"/></svg></button><button aria-label="Close"><svg class="i12"><use href="#xbold"/></svg></button></header>
          <div class="nav-search">
            <label class="searchbox"><input type="text" placeholder="Enter text to search..." aria-label="Search"><svg class="i12"><use href="#search"/></svg></label>
            <button aria-label="Show all"><svg class="i16"><use href="#bulb"/></svg></button>
            <button aria-label="Show offline"><svg class="i16"><use href="#bulb-off"/></svg></button>
          </div>
          <div class="nav-body">
            <ul class="tree">
              <li class="dir"><svg class="i6"><use href="#tri"/></svg><svg class="i16"><use href="#folder"/></svg></li>
              <li><svg class="i16"><use href="#rdp"/></svg><span>NETVS-QA153A01</span></li>
              <li><svg class="i16"><use href="#rdp"/></svg><span>NETVM-QA161C03</span></li>
              <li><svg class="i16"><use href="#rdp"/></svg><span>NETVM-QA153C01</span></li>
              <li><svg class="i16"><use href="#rdp"/></svg><span>NETVM-QA152C02</span></li>
              <li><svg class="i16"><use href="#rdp"/></svg><span>NETVS-QA161A03</span></li>
              <li><svg class="i16"><use href="#rdp"/></svg><span>NETVM-QA161C02</span></li>
              <li><svg class="i16"><use href="#rdp"/></svg><span>NETVS-QA161A02</span></li>
              <li><svg class="i16"><use href="#rdp"/></svg><span>NETVM-QA153C02</span></li>
              <li><svg class="i16"><use href="#rdp"/></svg><span>NETVS-QA152A01</span></li>
              <li><svg class="i16"><use href="#rdp"/></svg><span>NETVM-QA152C01</span></li>
              <li><svg class="i16"><use href="#rdp"/></svg><span>NETVS-QA153A02</span></li>
              <li class="dir"><svg class="i6"><use href="#tri"/></svg><svg class="i16"><use href="#folder"/></svg><span>DailyCopy</span></li>
              <li><svg class="i16"><use href="#rdp"/></svg><span>NETVS-QADEV01</span></li>
              <li><svg class="i16"><use href="#rdp"/></svg><span>NETVS-QADEV04</span></li>
              <li><svg class="i16"><use href="#rdp"/></svg><span>NETVS-QADEV03</span></li>
              <li class="dir"><svg class="i6"><use href="#tri"/></svg><svg class="i16"><use href="#folder"/></svg><span>GUI Regression</span></li>
              <li><svg class="i16"><use href="#rdp"/></svg><span>NETVM-QA162C02</span></li>
              <li><svg class="i16"><use href="#rdp"/></svg><span>NETVS-QA162A02</span></li>
              <li><svg class="i16"><use href="#rdp"/></svg><span>NETVS-QA163A02</span></li>
              <li><svg class="i16"><use href="#rdp"/></svg><span>NETVM-QA163C02</span></li>
              <li><svg class="i16"><use href="#rdp"/></svg><span>NETVS-QA171A02</span></li>
              <li><svg class="i16"><use href="#rdp"/></svg><span>NETVM-QA171C02</span></li>
              <li class="sel"><svg class="i16"><use href="#rdp-on"/></svg><span>NETVM-QA172C02</span></li>
              <li><svg class="i16"><use href="#rdp"/></svg><span>NETVS-QA172A02</span></li>
              <li class="dir"><svg class="i6"><use href="#tri"/></svg><svg class="i16"><use href="#folder"/></svg><span>Internal Regression</span></li>
              <li><svg class="i16"><use href="#rdp"/></svg><span>NETVM-QA162C01</span></li>
              <li><svg class="i16"><use href="#rdp"/></svg><span>NETVM-QA163C01</span></li>
              <li><svg class="i16"><use href="#rdp"/></svg><span>NETVS-QA162A01</span></li>
              <li><svg class="i16"><use href="#rdp"/></svg><span>NETVS-QA163A01</span></li>
              <li><svg class="i16"><use href="#rdp"/></svg><span>NETVS-QA171A01</span></li>
              <li><svg class="i16"><use href="#rdp"/></svg><span>NETVM-QA171C01</span></li>
              <li><svg class="i16"><use href="#rdp"/></svg><span>NETVS-QA172A01</span></li>
              <li><svg class="i16"><use href="#rdp"/></svg><span>NETVM-QA172C01</span></li>
              <li class="dir"><svg class="i6"><use href="#tri"/></svg><svg class="i16"><use href="#folder"/></svg><span>Other</span></li>
              <li><svg class="i16"><use href="#rdp"/></svg><span>BERVM-PS7</span></li>
              <li><svg class="i16"><use href="#rdp"/></svg><span>NETVS-P31</span></li>
              <li><svg class="i16"><use href="#rdp"/></svg><span>NETVS-PM-07</span></li>
              <li><svg class="i16"><use href="#rdp"/></svg><span>BERVS-CDB</span></li>
              <li><svg class="i16"><use href="#rdp"/></svg><span>NETVS-DEPLOY</span></li>
              <li><svg class="i16"><use href="#rdp"/></svg><span>NETSV-DBS12REG</span></li>
            </ul>
            <div class="scroll nav-scroll"><svg class="i8"><use href="#chev-up"/></svg><span class="thumb"></span><svg class="i8"><use href="#chev-down"/></svg></div>
          </div>
        </aside>
        <div class="docs">
          <div class="doctabs">
            <button class="t-dash"><svg class="i16"><use href="#gauge"/></svg>Dashboard</button>
            <button class="t-start"><svg class="i16"><use href="#help"/></svg>Getting Started</button>
            <button class="t-on"><svg class="i16"><use href="#rdp-on"/></svg>NETVM-QA172C02<svg class="i10"><use href="#xbold"/></svg></button>
            <button class="doclist" aria-label="Documents"><svg class="i6"><use href="#down"/></svg></button>
          </div>
          <section class="session app">
            <header class="titlebar">
              <svg class="i16"><use href="#brady"/></svg>
              <h2 class="title">Brady Energy Trading and Risk Management 2017.2.1.137</h2>
              <div class="wincontrols">
                <button aria-label="Minimize"><svg class="i12"><use href="#min"/></svg></button>
                <button aria-label="Restore"><svg class="i12"><use href="#restore"/></svg></button>
                <button aria-label="Close"><svg class="i12"><use href="#close"/></svg></button>
              </div>
            </header>
            <nav class="menu">
              <button>Home</button><button>Contracts</button><button>Curves</button><button>Market Data</button><button>Reporting</button><button>Configuration</button><button>Window</button><button>Help</button>
            </nav>
            <aside class="player">
              <div class="player-box">
                <span class="player-logo"><svg class="i32"><use href="#tc"/></svg></span>
                <span class="player-keys"><button aria-label="Stop"><svg class="i12"><use href="#stop"/></svg></button></span>
              </div>
              <div class="balloon balloon-wait">
                <p>Waiting for Window: WndClass - "*", WndCaption - "Deal Entry"</p>
                <div class="progress"><span style="width:86%"></span></div>
                <p class="under">DealEntry</p>
              </div>
            </aside>
            <div class="workspace ws-remote">
              <p class="watermark"><span>Activate Windows</span>Go to Settings to activate Windows.</p>
            </div>
            <footer class="status">
              <span class="cell">Connected to ETRM server</span><span class="cell">TEST Environment 17.2</span><span class="cell cell-user"><svg class="i16"><use href="#user"/></svg>Vizard</span>
              <span class="scope"><svg viewBox="0 0 68 22"><path d="M3 11h62M10 4v14M34 4v14M58 4v14" stroke="#0b8a12"/><path d="M9 12V6l2 3v3l2 3 2-2" fill="none" stroke="#1dff1d" stroke-width="2.500"/></svg></span>
            </footer>
            <footer class="taskbar taskbar-remote">
              <div class="sys">
                <button aria-label="Start"><svg class="i16"><use href="#win"/></svg></button>
                <button aria-label="Search"><svg class="i16"><use href="#search"/></svg></button>
                <button aria-label="Task view"><svg class="i20"><use href="#taskview"/></svg></button>
              </div>
              <div class="apps">
                <button aria-label="Edge"><svg class="i24"><use href="#edge"/></svg></button>
                <button aria-label="File Explorer"><svg class="i24"><use href="#explorer"/></svg></button>
                <button aria-label="Store"><svg class="i24"><use href="#store"/></svg></button>
                <button aria-label="Mail"><svg class="i24"><use href="#mail"/></svg></button>
                <button class="open" aria-label="Test runner"><svg class="i20"><use href="#window-app"/></svg></button>
                <button class="open many" aria-label="Internet Explorer"><svg class="i24"><use href="#ie"/></svg></button>
                <button class="open active" aria-label="Brady ETRM"><svg class="i24"><use href="#brady-big"/></svg></button>
              </div>
              <div class="tray">
                <svg class="i16"><use href="#tray-up" x="2" y="4" width="12" height="8"/></svg>
                <svg class="i16"><use href="#tray-key"/></svg>
                <svg class="i16"><use href="#tray-net"/></svg>
                <span class="lang">ENG</span>
                <time class="clock">08:01<br>05/09/2017</time>
                <span class="chat"><svg class="i16"><use href="#tray-chat"/></svg><b>2</b></span>
                <span class="peek"></span>
              </div>
            </footer>
          </section>
        </div>
      </div>
      <footer class="rt-status">
        <span class="rt-msg"><svg class="i16"><use href="#info"/></svg>07:47:14 Connected to NETVM-QA172C02</span>
        <span class="rt-count"><svg class="i16"><use href="#bulb"/></svg>1 of 82</span>
        <span class="rt-lic"><svg class="i16"><use href="#license"/></svg>Standard License</span>
        <svg class="grip"><use href="#grip"/></svg>
      </footer>
    </section>
  </section>
</main>
</body>
</html>
```
FILE: styles.css
```css
* { box-sizing: border-box; }
body, h1, h2, h3, p, ul { margin: 0; padding: 0; }
body { font: 12px/16px "Open Sans", "Noto Sans", sans-serif; color: #000; background: #ababab; overflow: hidden; }
h1, h2, h3 { font: inherit; }
ul { list-style: none; }
button { font: inherit; color: inherit; background: none; border: 0; padding: 0; margin: 0; display: flex; align-items: center; white-space: nowrap; }
svg { display: block; flex: none; }
.sprite { position: absolute; width: 0; height: 0; }
.i6 { width: 6px; height: 6px; }
.i8 { width: 8px; height: 8px; }
.i10 { width: 10px; height: 10px; }
.i12 { width: 12px; height: 12px; }
.i14 { width: 14px; height: 14px; }
.i16 { width: 16px; height: 16px; }
.i20 { width: 20px; height: 20px; }
.i24 { width: 24px; height: 24px; }
.i32 { width: 32px; height: 32px; }
.iaz { width: 10px; height: 18px; }

.desktop { display: grid; grid-template-columns: minmax(0, 1fr) minmax(0, 1fr); min-height: 100vh; }
.monitor { position: relative; }

/* Trading client */
.app { position: relative; display: flex; flex-direction: column; }
.titlebar { display: flex; align-items: center; height: 23px; padding: 1px 0 0 2px; gap: 5px; background: #fff; }
.titlebar-idle { color: #999; }
.title { flex: 1; }
.wincontrols { display: flex; gap: 34px; padding-right: 19px; height: 20px; align-items: center; }
.menu { display: flex; height: 24px; gap: 17px; padding-left: 16px; align-items: center; background: linear-gradient(90deg, #f0f0f0 20%, #fcfcfc 90%); }
.workspace { position: relative; flex: 1; min-height: 480px; background: #ababab; }
.status { display: flex; height: 30px; padding: 3px 20px 3px 1px; gap: 2px; background: #f0f0f0; border-top: 1px solid #d8d8d8; }
.cell { display: flex; align-items: center; padding: 0 0 0 4px; border: 1px solid #a0a0a0; border-right-color: #fff; border-bottom-color: #fff; }
.cell-user { padding: 0 3px 0 1px; gap: 4px; }
.scope { margin: -2px 0 0 auto; height: 26px; padding: 1px; border: 1px solid #999; background: #fff; }
.scope svg { width: 68px; height: 22px; background: #000; }

/* Playback overlay */
.player { position: absolute; z-index: 3; top: 24px; right: 18px; display: flex; flex-direction: column; align-items: flex-end; gap: 4px; font: 11px/14px "DejaVu Sans Condensed", "DejaVu Sans", sans-serif; }
.player-box { display: flex; height: 40px; border: 1px solid #9a9a9a; border-radius: 4px; background: #191919; box-shadow: inset 0 0 0 1px #fff; overflow: hidden; }
.player-logo { display: flex; align-items: center; padding: 0 3px; background: linear-gradient(#f4f4f4, #b8b8b8); border: 1px solid #ddd; }
.player-keys { display: flex; align-items: center; gap: 4px; padding: 0 6px; }
.player-keys button { width: 22px; height: 22px; justify-content: center; border-radius: 4px; background: linear-gradient(#f0efea, #aca69c); }
.balloon { border: 1px solid #777; background: #fff; text-align: right; }
.balloon-play { width: 144px; height: 43px; padding: 3px; }
.balloon-play p { padding: 0 3px; }
.balloon-play .line { height: 17px; padding-top: 1px; border-bottom: 1px solid #000; }
.balloon .under { padding-top: 1px; }
.balloon-wait { width: 350px; height: 52px; padding: 4px 3px; }
.balloon-wait p { padding-right: 2px; }
.progress { height: 10px; padding: 2px; border: 1px solid #bcbcbc; background: #e6e6e6; margin: 1px 0; }
.progress span { display: block; height: 4px; background: repeating-linear-gradient(90deg, #06b025 0 4px, #e6e6e6 4px 5px); }

/* Child window */
.mdi { position: absolute; left: 25px; top: 78px; width: 1119px; max-width: calc(100% - 50px); padding: 3px; border: 1px solid #333; background: #bdd4ec; box-shadow: inset -1px -1px #4fd0ea, inset 1px 1px #fff; }
.mdi-title { display: flex; justify-content: space-between; height: 18px; padding: 0 2px; align-items: center; background: linear-gradient(#9ab7d5, #b8d0ea); }
.mdi-close { width: 17px; height: 17px; justify-content: center; color: #fff; border: 1px solid #501a1a; border-radius: 2px; background: linear-gradient(#e8a090, #c2503e); }
.toolbar { display: flex; align-items: center; gap: 6px; height: 25px; padding: 0 4px; background: linear-gradient(#fff, #f0f0f0); }
.tb-units { gap: 4px; margin-left: 3px; }
.tb-sep { width: 1px; height: 16px; background: #bbb; }
.tb-double { width: 8px; background: none; border: solid #bbb; border-width: 0 1px; }
.tb-gap { margin: 0 2px 0 6px; }
.combo { display: flex; align-items: center; width: 110px; height: 20px; background: #fff; }
.combo select { flex: 1; appearance: none; font: inherit; border: 0; background: none; padding: 0; color: #000; }
.combo svg { margin-right: 3px; }
.tb-right { display: flex; gap: 7px; margin-left: auto; }
.grid-frame { padding: 1px; border: 1px solid #17389a; background: #aaa; }
.grid-view { display: flex; justify-content: space-between; height: 344px; padding-right: 2px; overflow: hidden; background: #fff; }
.grid { table-layout: fixed; width: 817px; border-spacing: 0; align-self: flex-start; }
.c-name { width: 112px; } .c-gap { width: 18px; } .c-chk { width: 19px; } .c-num { width: 43px; } .c-chg { width: 60px; } .c-cls { width: 48px; } .c-eur { width: 90px; } .c-hrs { width: 51px; } .c-date { width: 100px; } .c-vol { width: 90px; }
.grid th { height: 24px; padding: 1px 0 0 5px; text-align: left; font-weight: normal; white-space: nowrap; background: linear-gradient(#fff, #efefef); border-right: 2px solid #cfcfcf; border-bottom: 1px solid #b0b0b0; }
.grid td { height: 23px; padding: 2px 0 0 4px; white-space: nowrap; border-right: 1px dotted #a8a8a8; border-bottom: 1px dotted #a8a8a8; }
.grid tbody tr:nth-child(even) { background: #e3e3e3; }
.grid td:first-child, .grid td:nth-child(2) { background: #f0f0f0; }
.grid td:first-child, .grid td:nth-child(9) { font-weight: bold; }
.grid th.chk, .grid td:nth-child(3) { padding: 0 2px; background: #fff; }
.grid input { appearance: none; display: block; width: 14px; height: 14px; margin: 0; border: 1px solid #333; background: #fff; }
.grid input:checked::after { content: ""; display: block; width: 9px; height: 5px; margin: 2px 1px; border: solid #333; border-width: 0 0 1px 1px; transform: rotate(-45deg); }
.grid .some::after { content: ""; display: block; width: 8px; height: 8px; margin: 2px; background: #222; }
.th-eur svg { display: inline-block; vertical-align: middle; margin: 0 5px 0 -2px; }
.scroll { display: flex; flex-direction: column; align-items: center; background: #f0f0f0; color: #505050; }
.scroll svg:first-child { margin: 5px 0 4px; }
.scroll svg:last-child { margin: auto 0 5px; }
.scroll .thumb { width: 100%; background: #cdcdcd; }
.grid-scroll { width: 15px; }
.grid-scroll .thumb { height: 114px; }
.sheet-tabs { display: flex; height: 23px; align-items: flex-start; background: linear-gradient(#fff, #c3d8f6); }
.tab-slope { width: 22px; height: 20px; }
.sheet-tabs button { height: 20px; padding-top: 1px; }
.sheet-tabs .sheet-on { padding-left: 9px; padding-right: 4px; background: #fff; border-bottom: 1px solid #17389a; }
.sheet-tabs .sheet-off { padding-left: 11px; padding-right: 6px; background: #c0d2f4; border: solid #17389a; border-width: 0 2px 1px; }
.cursor { position: absolute; left: 425px; top: 526px; width: 12px; height: 19px; }

/* Taskbars */
.taskbar { display: flex; height: 40px; color: #fff; background: #101010; }
.taskbar-remote { background: #000308; }
.sys { display: flex; margin-right: 2px; }
.apps { display: flex; gap: 1px; }
.sys button, .apps button { width: 48px; height: 40px; justify-content: center; }
.apps .open { background: linear-gradient(#8ea9d2, #8ea9d2) 50% 100% / 40px 2px no-repeat; }
.apps .many { background: linear-gradient(90deg, #8ea9d2 32px, #5c708c 32px) 50% 100% / 40px 2px no-repeat; }
.taskbar-remote .open { background-image: linear-gradient(#76b9ed, #76b9ed); }
.apps .active { background-color: #333435; background-size: 48px 2px; }
.tray { display: flex; align-items: center; gap: 8px; margin-left: auto; }
.lang { margin-right: 6px; }
.clock { width: 70px; text-align: center; line-height: 18px; }
.peek { width: 1px; height: 40px; background: #555; margin-right: 2px; }
.chat { position: relative; margin-right: 12px; }
.chat b { position: absolute; left: 8px; top: 8px; width: 16px; height: 16px; border-radius: 8px; border: 1px solid #888; background: #333; font-size: 11px; line-height: 14px; text-align: center; }

/* Second monitor */
.wallpaper { overflow: hidden; background:
  radial-gradient(ellipse 260px 60px at 62% 1%, #70852f 0%, transparent 100%),
  radial-gradient(ellipse 160px 50px at 97% 0%, #36470f 0%, transparent 100%),
  radial-gradient(ellipse 60px 200px at 0% 35%, #8a8040 0%, transparent 100%),
  radial-gradient(ellipse 400px 60px at 58% 100%, #8b7a3c 0%, transparent 100%),
  radial-gradient(ellipse 300px 60px at 25% 100%, #7d6a34 0%, transparent 100%),
  radial-gradient(ellipse 60px 400px at 100% 70%, #38500f 0%, transparent 100%),
  linear-gradient(90deg, #6d652c, #73702f 30%, #6e7030 60%, #5c5e1f 90%, #54551a); }
.sticky { position: absolute; top: 25px; right: 28px; bottom: 107px; width: 366px; color: #b8b478; background: linear-gradient(#f9f6a8 28px, #fefdc4 28px, #fcf79a); box-shadow: 2px 3px 5px rgba(0, 0, 0, .5); }
.grip { position: absolute; right: 3px; bottom: 3px; width: 10px; height: 10px; }
.royal { position: absolute; inset: 29px 51px 39px 23px; display: flex; flex-direction: column; color: #444; background: #f4f4f4; border: 1px solid #66686c; }
.rt-title { display: grid; grid-template-columns: 1fr auto 1fr; height: 30px; }
.rt-title h2 { align-self: center; color: #999; }
.rt-left { display: flex; }
.quick { display: flex; align-items: center; gap: 12px; width: 422px; padding-left: 5px; }
.quick button:last-child { margin-left: 6px; }
.context { display: flex; justify-content: center; align-items: center; width: 168px; color: #777; background: #f0f7e0; border-top: 4px solid #a6d14a; padding-bottom: 4px; }
.rt-controls { display: flex; justify-content: flex-end; align-items: center; gap: 18px; padding-right: 14px; color: #aaa; }
.rt-tabs { display: flex; height: 24px; border-bottom: 1px solid #c9c9c9; }
.rt-tabs button { height: 24px; justify-content: center; }
.rt-tabs .file { width: 56px; color: #fff; background: #854f00; }
.tabset { display: flex; justify-content: space-between; width: 366px; padding: 0 12px 0 17px; }
.rt-tabs .on { width: 76px; color: #854f00; background: #f4f4f4; border: 1px solid #c9c9c9; border-bottom: 0; }
.context-fill { width: 92px; background: #f0f7e0; }
.rt-tabs .helpbtn { margin-left: auto; padding: 0 7px; }
.ribbon { display: flex; height: 99px; padding-top: 7px; border-bottom: 1px solid #c9c9c9; }
.group { display: flex; flex-direction: column; justify-content: space-between; align-items: center; height: 86px; border-right: 1px solid #d4d4d4; flex: none; }
.caption { line-height: 14px; margin-bottom: -2px; }
.g-common { width: 282px; } .g-clip { width: 257px; } .g-tasks { width: 262px; } .g-resize { width: 122px; } .g-input { width: 117px; } .g-remote { width: 280px; } .g-zoom { width: 134px; }
.common { display: flex; align-self: stretch; }
.common-a, .common-b { display: grid; grid-template-rows: repeat(3, 23px); height: 62px; }
.common-a { width: 100px; padding-left: 10px; border-right: 1px solid #d4d4d4; }
.common-b { padding-left: 9px; }
.common button { height: 18px; gap: 5px; }
.common .dim { color: #999; }
.big { display: grid; align-self: stretch; }
.big button { flex-direction: column; line-height: 15px; }
.big .i32 { margin-bottom: 5px; }
.big span { display: flex; align-items: center; gap: 5px; height: 15px; }
.g-clip .big { grid-template-columns: repeat(3, 1fr); }
.g-tasks .big { grid-template-columns: 106px 80px 75px; }
.g-resize .big { grid-template-columns: 54px 58px; }
.g-remote .big { grid-template-columns: 54px 36px 82px 46px 62px; }
.g-zoom .big { grid-template-columns: 66px 62px; }
.collapse { margin: auto 12px 8px auto; }

.rt-body { flex: 1; min-height: 0; display: flex; gap: 5px; padding: 2px 1px 3px; }
.navpane { display: flex; flex-direction: column; width: 262px; border: 1px solid #a8a8a8; flex: none; }
.nav-head { display: flex; align-items: center; height: 36px; padding: 0 10px; gap: 3px; }
.nav-head h3 { flex: 1; font-size: 14px; line-height: 20px; }
.nav-head button + button { margin-left: 5px; }
.nav-search { display: flex; align-items: center; gap: 12px; height: 34px; padding: 0 8px; }
.searchbox { display: flex; align-items: center; width: 188px; height: 22px; padding: 0 4px; border: 1px solid #a0a0a0; }
.searchbox input { flex: 1; min-width: 0; font: inherit; border: 0; background: none; padding: 0; }
.searchbox input::placeholder { color: #999; }
.nav-body { display: flex; flex: 1; min-height: 0; justify-content: space-between; overflow: hidden; contain: paint; }
.tree { margin-top: -16px; }
.tree li { display: flex; align-items: center; height: 22px; padding-left: 56px; gap: 3px; }
.tree li span { line-height: 20px; padding: 0 5px 0 2px; }
.tree .dir { padding-left: 26px; gap: 6px; }
.tree .dir span { padding-left: 0; }
.tree .sel span { background: #eee4d8; }
.nav-scroll { width: 17px; background: #e8e8e8; margin-right: 1px; }
.nav-scroll svg:first-child { margin: 3px 0 21px; }
.nav-scroll .thumb { height: 345px; background: #c6c6c6; }
.docs { flex: 1; min-width: 0; display: flex; flex-direction: column; padding-top: 2px; }
.doctabs { display: flex; height: 26px; border-bottom: 2px solid #808080; }
.doctabs button { gap: 4px; color: #777; background: #e2e2e2; border: 1px solid #a0a0a0; border-bottom: 0; padding-left: 10px; }
.t-dash { width: 119px; }
.t-start { width: 147px; }
.doctabs .t-on { width: 167px; color: #fff; background: #4a4a4a; border-color: #4a4a4a; font-weight: bold; padding-left: 12px; margin-top: -2px; }
.t-on svg:last-child { margin-left: 8px; }
.doctabs .doclist { margin-left: auto; padding-right: 8px; background: none; border: 0; }
.session { flex: 1; min-height: 0; color: #000; border-left: 1px solid #808080; border-right: 2px solid #000; }
.ws-remote { min-height: 0; }
.watermark { position: absolute; right: 64px; bottom: 10px; color: #a8a8a8; font-size: 14px; line-height: 20px; }
.watermark span { display: block; font-size: 20px; line-height: 28px; }
.rt-status { position: relative; display: flex; align-items: center; height: 23px; padding: 0 38px 0 8px; color: #fff; background: #854f00; }
.rt-status > span { display: flex; align-items: center; gap: 5px; }
.rt-msg { flex: 1; }
.rt-lic { margin-left: 9px; }
.rt-status .grip { right: 1px; bottom: 1px; color: #cfc0a4; width: 8px; height: 8px; }
```
